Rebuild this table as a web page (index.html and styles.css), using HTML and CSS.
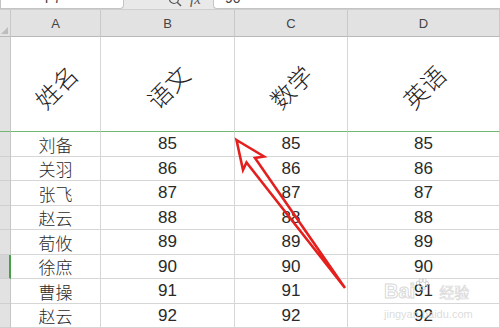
FILE: index.html
```html
<!DOCTYPE html>
<html lang="zh">
<head>
<meta charset="utf-8">
<link rel="stylesheet" href="styles.css">
</head>
<body>
<div class="page">
  <div class="toolbar">
    <div class="namebox"><span class="cut">F7</span></div>
    <div class="tools">
      <svg class="icon-search" width="16" height="8" viewBox="0 0 16 8"><circle cx="6" cy="-1" r="4.5" fill="none" stroke="#555" stroke-width="1.2"/><line x1="9.2" y1="2.3" x2="13" y2="6" stroke="#555" stroke-width="1.4"/></svg>
      <span class="fx">fx</span>
    </div>
    <div class="formula"><span class="cut">90</span></div>
  </div>
  <div class="sheet">
    <div class="corner"><span class="tri"></span></div>
    <div class="colhead">A</div>
    <div class="colhead">B</div>
    <div class="colhead">C</div>
    <div class="colhead">D</div>

    <div class="rowhead tall"></div>
    <div class="cell tall"><span class="rot">姓名</span></div>
    <div class="cell tall"><span class="rot">语文</span></div>
    <div class="cell tall"><span class="rot">数学</span></div>
    <div class="cell tall"><span class="rot">英语</span></div>

    <div class="rowhead"></div><div class="cell name">刘备</div><div class="cell num">85</div><div class="cell num">85</div><div class="cell num">85</div>
    <div class="rowhead"></div><div class="cell name">关羽</div><div class="cell num">86</div><div class="cell num">86</div><div class="cell num">86</div>
    <div class="rowhead"></div><div class="cell name">张飞</div><div class="cell num">87</div><div class="cell num">87</div><div class="cell num">87</div>
    <div class="rowhead"></div><div class="cell name">赵云</div><div class="cell num">88</div><div class="cell num">88</div><div class="cell num">88</div>
    <div class="rowhead"></div><div class="cell name">荀攸</div><div class="cell num">89</div><div class="cell num">89</div><div class="cell num">89</div>
    <div class="rowhead sel"></div><div class="cell name">徐庶</div><div class="cell num">90</div><div class="cell num">90</div><div class="cell num">90</div>
    <div class="rowhead"></div><div class="cell name">曹操</div><div class="cell num">91</div><div class="cell num">91</div><div class="cell num">91</div>
    <div class="rowhead"></div><div class="cell name">赵云</div><div class="cell num">92</div><div class="cell num">92</div><div class="cell num">92</div>
  </div>

  <svg class="arrow" width="500" height="328" viewBox="0 0 500 328">
    <polygon points="236.5,140 264,156.5 255,158 345,288 246.5,162.5 243,170" fill="none" stroke="#e3201e" stroke-width="2.6" stroke-linejoin="miter"/>
  </svg>

  <div class="watermark">
    <div class="wm-top"><span class="wm-bai">Bai</span><svg class="paw" width="14" height="14" viewBox="0 0 14 14"><g fill="none" stroke="#cfcfcf" stroke-width="1"><ellipse cx="3" cy="5" rx="1.6" ry="2"/><ellipse cx="6" cy="2.5" rx="1.6" ry="2"/><ellipse cx="9.5" cy="2.5" rx="1.6" ry="2"/><ellipse cx="12" cy="5.5" rx="1.5" ry="2"/><path d="M4 11 Q7 5 10.5 11 Q7 13 4 11 Z"/></g></svg><span class="wm-jy">经验</span></div>
    <div class="wm-url">jingyan.baidu.com</div>
  </div>
</div>
</body>
</html>
```
FILE: styles.css
```css
html, body {
  margin: 0;
  padding: 0;
  background: #ffffff;
}
.page {
  position: relative;
  width: 500px;
  height: 328px;
  overflow: hidden;
  font-family: "Liberation Sans", "Noto Sans CJK SC", sans-serif;
}
.toolbar {
  display: flex;
  height: 10px;
  background: #e9e9e9;
  border-bottom: 1px solid #cfcfcf;
  box-sizing: border-box;
}
.namebox {
  width: 124px;
  height: 9px;
  background: #fff;
  border: 1px solid #c4c4c4;
  border-top: none;
  border-radius: 0 0 4px 0;
  box-sizing: border-box;
  overflow: hidden;
  display: flex;
  justify-content: center;
}
.cut {
  display: block;
  margin-top: -9px;
  font-size: 14px;
  line-height: 14px;
  color: #444;
}
.namebox .cut {
  margin-left: -18px;
}
.tools {
  width: 89px;
  display: flex;
  align-items: flex-start;
  gap: 6px;
  padding-left: 44px;
  box-sizing: border-box;
  overflow: hidden;
}
.icon-search {
  display: block;
}
.fx {
  display: block;
  margin-top: -8px;
  font-family: "Liberation Serif", serif;
  font-style: italic;
  font-size: 15px;
  line-height: 14px;
  color: #555;
}
.formula {
  flex: 1;
  height: 9px;
  background: #fff;
  border: 1px solid #c4c4c4;
  border-top: none;
  border-right: none;
  border-radius: 0 0 0 4px;
  box-sizing: border-box;
  overflow: hidden;
  padding-left: 11px;
}
.sheet {
  display: grid;
  grid-template-columns: 11px 90px 134px 113px 152px;
  grid-template-rows: 27px 95px repeat(8, 24.5px);
}
.corner {
  background: #e2e2e2;
  border-right: 1px solid #c8c8c8;
  border-bottom: 1px solid #b9b9b9;
  position: relative;
}
.tri {
  position: absolute;
  right: 2px;
  bottom: 2px;
  width: 0;
  height: 0;
  border-left: 7px solid transparent;
  border-bottom: 7px solid #bdbdbd;
}
.colhead {
  background: #e2e2e2;
  border-right: 1px solid #c9c9c9;
  border-bottom: 1px solid #b9b9b9;
  display: flex;
  align-items: center;
  justify-content: center;
  font-size: 13px;
  color: #444;
  padding-top: 1px;
}
.rowhead {
  background: #e2e2e2;
  border-right: 1px solid #c6c6c6;
  border-bottom: 1px solid #cfcfcf;
  box-sizing: border-box;
}
.rowhead.sel {
  background: #d5d5d5;
  border-right: 2px solid #45a047;
}
.rowhead.tall {
  border-bottom: 1px solid #72b872;
}
.cell {
  border-right: 1px solid #d6d6d6;
  border-bottom: 1px solid #d6d6d6;
  display: flex;
  align-items: center;
  justify-content: center;
  color: #2a2a2a;
  min-width: 0;
}
.cell.tall {
  border-bottom: 1px solid #72b872;
  padding-top: 6px;
}
.rot {
  display: block;
  transform: rotate(-45deg);
  font-family: "Noto Sans CJK SC", sans-serif;
  font-weight: 300;
  font-size: 24px;
  line-height: 24px;
  color: #222;
  white-space: nowrap;
}
.name {
  font-family: "Noto Sans CJK SC", sans-serif;
  font-weight: 300;
  font-size: 17px;
  padding-top: 1px;
}
.num {
  font-size: 17px;
  padding-top: 1px;
}
.arrow {
  position: absolute;
  left: 0;
  top: 0;
  pointer-events: none;
}
.watermark {
  position: absolute;
  left: 384px;
  top: 278px;
  color: rgba(190, 190, 190, 0.55);
  pointer-events: none;
}
.wm-top {
  display: flex;
  align-items: flex-end;
}
.wm-bai {
  font-family: "Liberation Sans", sans-serif;
  font-weight: bold;
  font-size: 20px;
  line-height: 22px;
  color: transparent;
  -webkit-text-stroke: 1px rgba(200, 200, 200, 0.7);
}
.paw {
  margin: 0 10px 10px 0;
}
.wm-jy {
  font-family: "Noto Sans CJK SC", sans-serif;
  font-size: 15px;
  line-height: 20px;
  color: transparent;
  -webkit-text-stroke: 0.7px rgba(200, 200, 200, 0.7);
}
.wm-url {
  font-family: "Liberation Sans", sans-serif;
  font-size: 11px;
  line-height: 12px;
  margin-top: 6px;
  color: rgba(205, 205, 205, 0.7);
}
```
